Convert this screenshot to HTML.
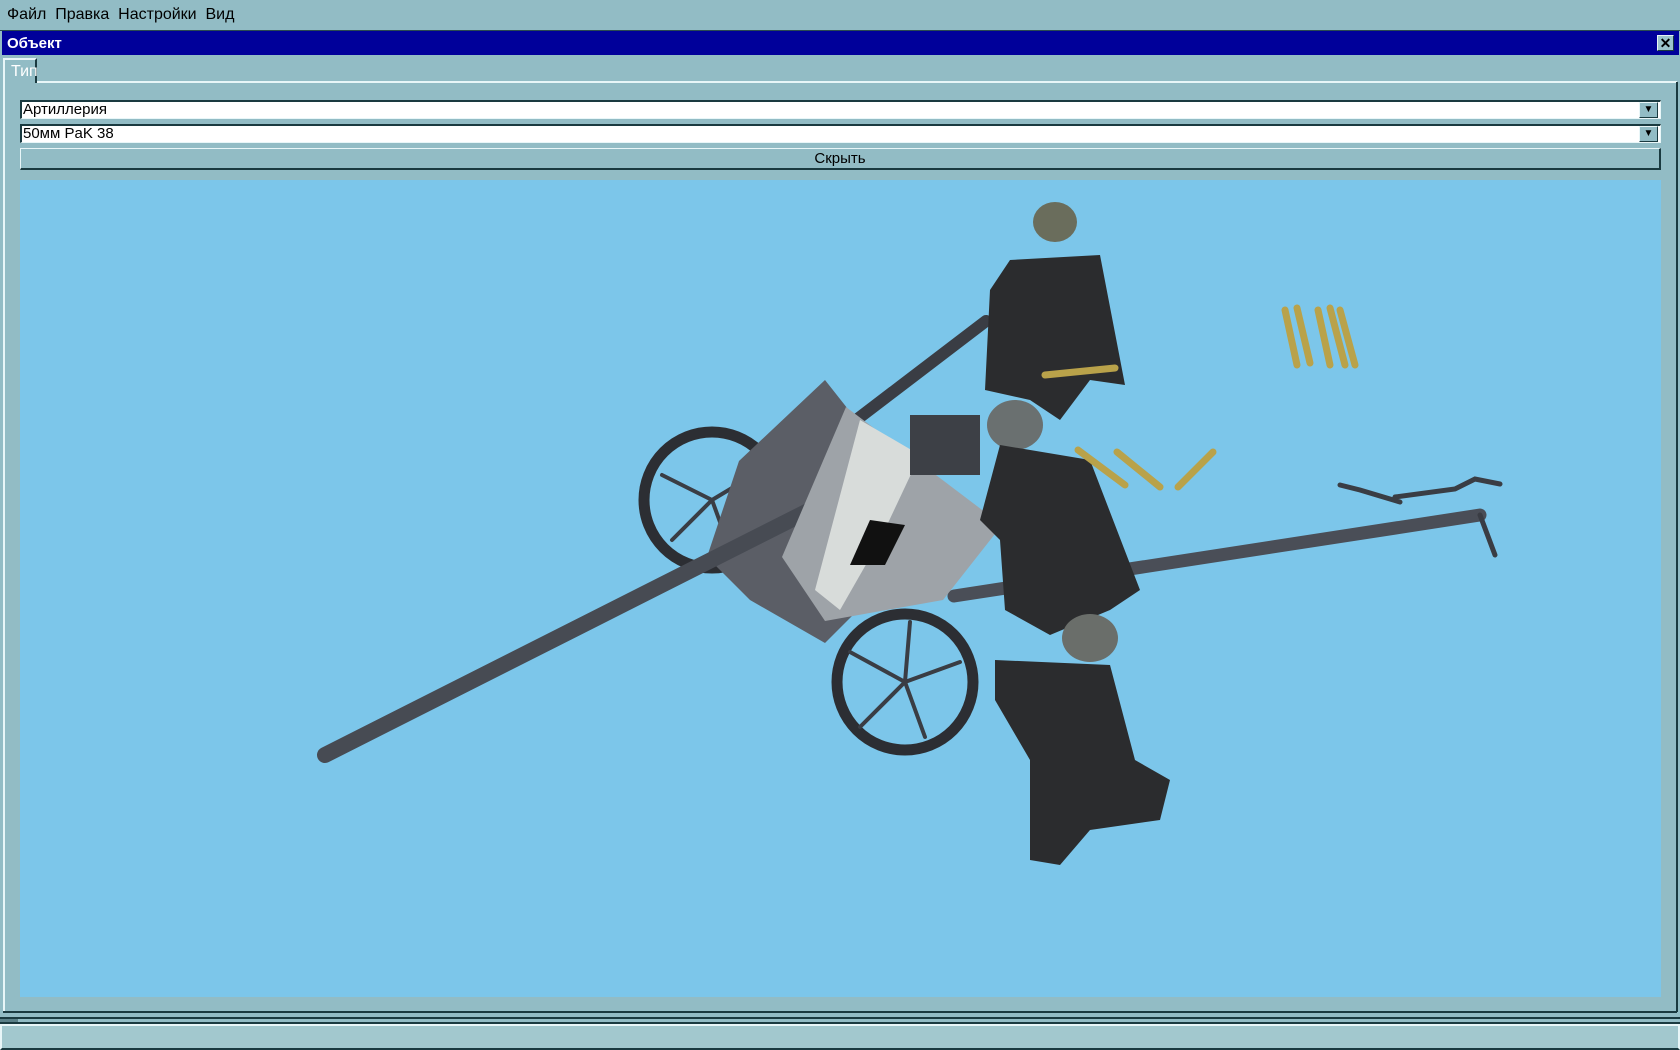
<!DOCTYPE html>
<html><head><meta charset="utf-8"><style>
*{margin:0;padding:0;box-sizing:border-box}
body{width:1680px;height:1050px;background:#92bcc5;font-family:"Liberation Sans",sans-serif;font-size:15px;color:#000;position:relative;overflow:hidden}
.a{position:absolute}
</style></head><body>
<div class="a" style="left:7px;top:6px;font-size:16px">Файл&nbsp;&nbsp;Правка&nbsp;&nbsp;Настройки&nbsp;&nbsp;Вид</div>
<div class="a" style="left:0;top:30px;width:1680px;height:1px;background:#2a4a50"></div>
<div class="a" style="left:2px;top:31px;width:1677px;height:24px;background:#00009a;color:#fff;font-weight:bold;padding:4px 5px">Объект</div>
<div class="a" style="left:1657px;top:35px;width:17px;height:16px;background:#9cc4cc;border:1px solid;border-color:#e8f4f6 #1a3a40 #1a3a40 #e8f4f6;font-weight:bold;font-size:14px;line-height:14px;text-align:center">✕</div>
<div class="a" style="left:3px;top:81px;width:1674px;height:2px;background:#e8f6f8"></div>
<div class="a" style="left:3px;top:58px;width:34px;height:25px;background:#92bcc5;border-left:2px solid #e8f6f8;border-top:2px solid #e8f6f8;border-right:2px solid #1a3a40;color:#fff;padding:3px 0 0 6px;font-size:16px">Тип</div>
<div class="a" style="left:3px;top:82px;width:2px;height:930px;background:#e8f6f8"></div>
<div class="a" style="left:1676px;top:82px;width:2px;height:930px;background:#1a3a40"></div>
<div class="a" style="left:20px;top:100px;width:1641px;height:19px;background:#fff;border:1px solid;border-color:#1a3a40 #e8f6f8 #e8f6f8 #1a3a40;border-width:2px 1px 1px 2px;line-height:15px;padding-left:1px;font-size:15px">Артиллерия</div>
<div class="a" style="left:1639px;top:102px;width:19px;height:16px;background:#92bcc5;border:1px solid;border-color:#e8f6f8 #1a3a40 #1a3a40 #e8f6f8;font-size:10px;text-align:center;line-height:14px">▼</div>
<div class="a" style="left:20px;top:124px;width:1641px;height:19px;background:#fff;border:1px solid;border-color:#1a3a40 #e8f6f8 #e8f6f8 #1a3a40;border-width:2px 1px 1px 2px;line-height:15px;padding-left:1px">50мм PaK 38</div>
<div class="a" style="left:1639px;top:126px;width:19px;height:16px;background:#92bcc5;border:1px solid;border-color:#e8f6f8 #1a3a40 #1a3a40 #e8f6f8;font-size:10px;text-align:center;line-height:14px">▼</div>
<div class="a" style="left:20px;top:148px;width:1641px;height:22px;border:1px solid;border-color:#e8f6f8 #1a3a40 #1a3a40 #e8f6f8;border-width:1px 2px 2px 1px;text-align:center;line-height:19px">Скрыть</div>
<div class="a" style="left:20px;top:180px;width:1641px;height:817px;background:#7cc6ea">
<svg width="1641" height="817" viewBox="20 180 1641 817" style="position:absolute;left:0;top:0">
<g stroke="#3a3d44" stroke-linecap="round" fill="none">
<line x1="830" y1="440" x2="986" y2="321" stroke-width="12"/>
<line x1="954" y1="596" x2="1480" y2="515" stroke-width="13" stroke="#4a4e57"/>
<path d="M1395 497 l60 -8 l20 -10 l25 5 M1400 502 l-40 -12 l-20 -5 M1480 515 l15 40" stroke-width="5"/>
<circle cx="712" cy="500" r="68" stroke-width="11" stroke="#2c2e33"/>
<circle cx="905" cy="682" r="68" stroke-width="11" stroke="#2c2e33"/>
<path d="M712 500 l50 -30 M712 500 l-40 40 M712 500 l20 55 M712 500 l-50 -25 M905 682 l55 -20 M905 682 l-45 45 M905 682 l5 -60 M905 682 l20 55 M905 682 l-55 -30" stroke-width="4"/>
</g>
<polygon points="739,461 825,380 889,461 930,500 960,560 857,611 825,643 750,600 707,557" fill="#5b5e66"/>
<line x1="325" y1="755" x2="830" y2="500" stroke-width="16" stroke="#474b53" stroke-linecap="round"/>
<polygon points="846,407 1002,525 943,600 825,621 782,557" fill="#9ea3a8"/>
<polygon points="860,420 920,455 880,540 840,610 815,590" fill="#d8dcda"/>
<polygon points="870,520 905,525 885,565 850,565" fill="#111"/>
<rect x="910" y="415" width="70" height="60" fill="#3d4046"/>
<g fill="#2b2c2e">
<ellipse cx="1055" cy="222" rx="22" ry="20" fill="#6a6d5c"/>
<polygon points="1010,260 1100,255 1125,385 1090,380 1060,420 1030,400 985,390 990,290"/>
<ellipse cx="1015" cy="425" rx="28" ry="25" fill="#6a7070"/>
<polygon points="1000,445 1090,460 1140,590 1110,610 1050,635 1005,610 1000,540 980,520"/>
<ellipse cx="1090" cy="638" rx="28" ry="24" fill="#6a6e6a"/>
<polygon points="995,660 1110,665 1135,760 1170,780 1160,820 1090,830 1060,865 1030,860 1030,760 995,700"/>
</g>
<g stroke="#b9a24a" stroke-width="7" stroke-linecap="round">
<line x1="1045" y1="375" x2="1115" y2="368"/>
<line x1="1078" y1="450" x2="1125" y2="485"/><line x1="1117" y1="452" x2="1160" y2="487"/><line x1="1213" y1="452" x2="1178" y2="487"/>
<line x1="1285" y1="310" x2="1297" y2="365"/><line x1="1297" y1="308" x2="1310" y2="363"/><line x1="1318" y1="310" x2="1330" y2="365"/><line x1="1330" y1="308" x2="1345" y2="365"/><line x1="1340" y1="310" x2="1355" y2="365"/>
</g>
</svg>
</div>
<div class="a" style="left:3px;top:1011px;width:1674px;height:2px;background:#1a3a40"></div>
<div class="a" style="left:0;top:1017px;width:1680px;height:2px;background:#1a3a40"></div>
<div class="a" style="left:0;top:1022px;width:1680px;height:2px;background:#1a3a40"></div>
<div class="a" style="left:0;top:1019px;width:18px;height:3px;background:#5a8088"></div>
<div class="a" style="left:0;top:1024px;width:1680px;height:26px;background:#a2c8ce;border:2px solid;border-color:#e8f6f8 #e8f6f8 #1a3a40 #e8f6f8"></div>
</body></html>
